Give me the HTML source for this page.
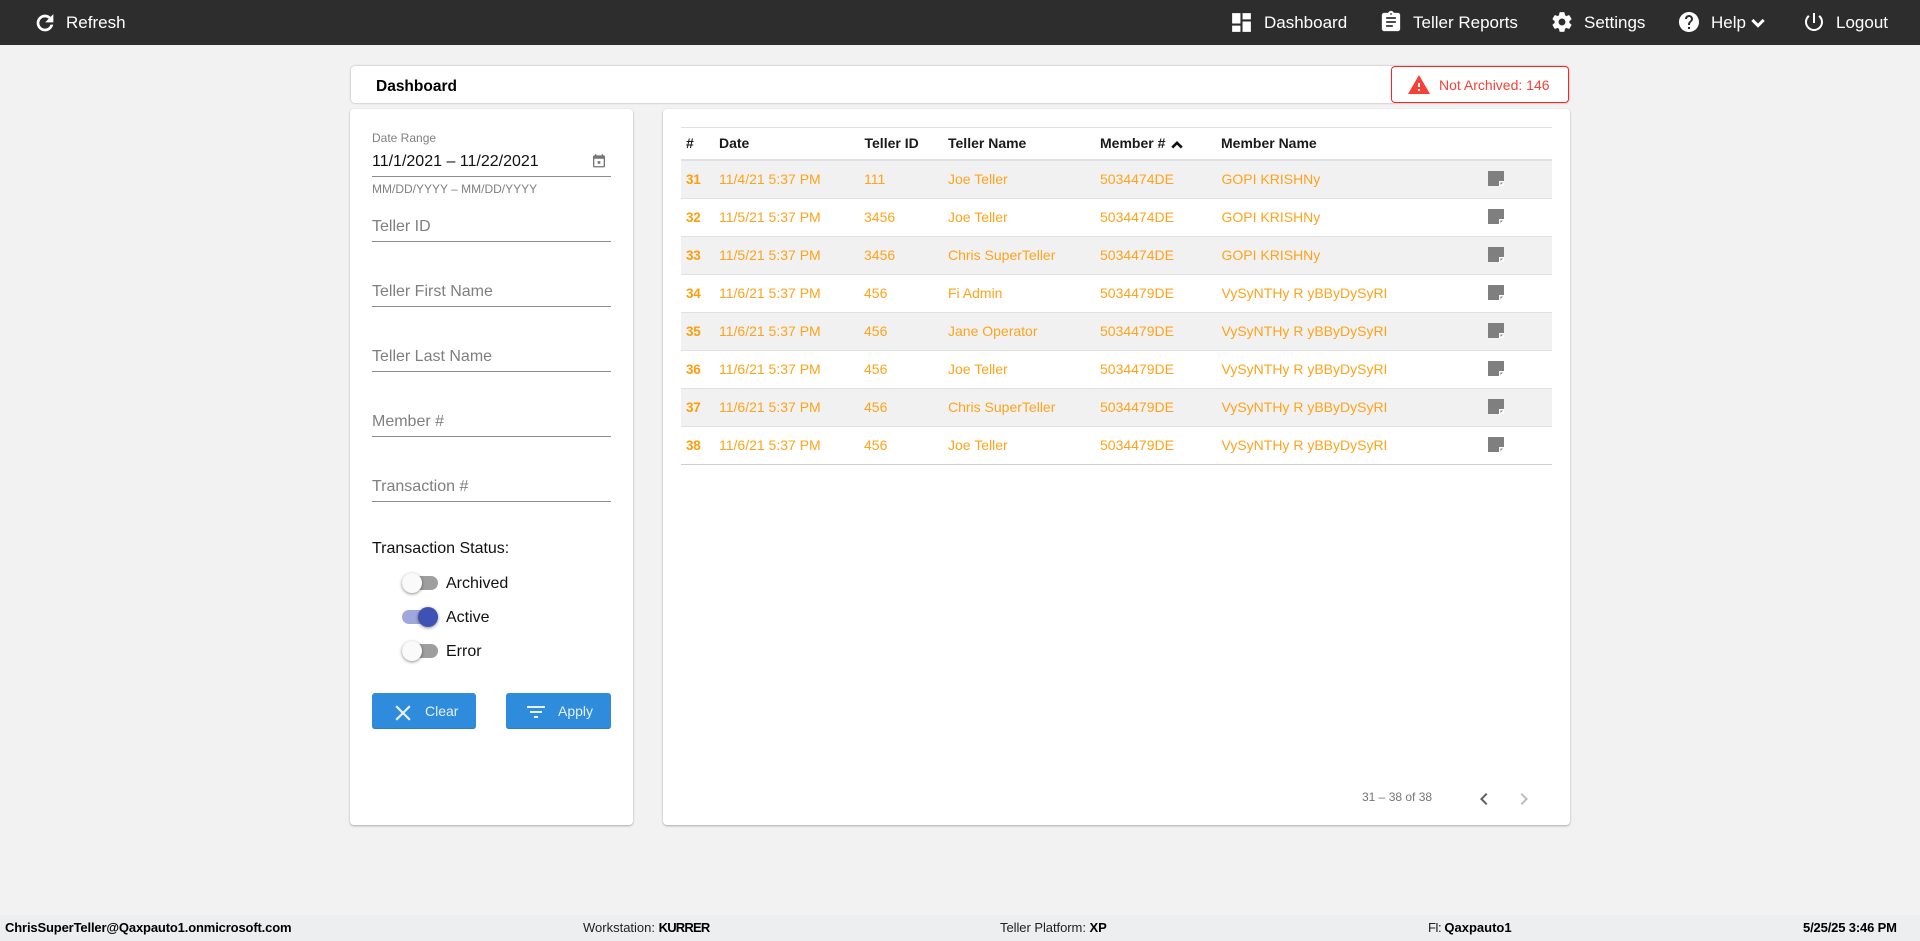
<!DOCTYPE html>
<html><head><meta charset="utf-8"><title>Dashboard</title>
<style>
html,body{margin:0;padding:0;width:1920px;height:941px;overflow:hidden;background:#f2f2f2;font-family:"Liberation Sans",Arial,sans-serif;}
.a{position:absolute;white-space:nowrap;line-height:1;}
svg{position:absolute;display:block;}
#top{position:absolute;left:0;top:0;width:1920px;height:45px;background:#2d2d2d;}
.nav{color:#fff;font-size:17px;top:14px;}
.card{position:absolute;background:#fff;border-radius:4px;box-shadow:0 1px 2px rgba(0,0,0,.3);}
.ph{color:#7f7f7f;font-size:16px;left:372px;}
.ul{position:absolute;left:372px;width:239px;height:1px;background:#8c8c8c;}
.track{position:absolute;left:402px;width:36px;height:14px;border-radius:7px;background:#9e9e9e;}
.thumb{position:absolute;left:402px;width:20px;height:20px;border-radius:50%;background:#fafafa;box-shadow:0 1px 3px rgba(0,0,0,.45);}
.lab{font-size:16px;color:#111;left:446px;}
.btn{position:absolute;top:693px;height:36px;background:#2f8cdc;border-radius:3px;box-shadow:inset 0 -1px 0 #2a7fc8;}
.bt{color:#e6f1fb;font-size:14px;top:704px;}
.row{position:absolute;left:681px;width:871px;height:37px;border-bottom:1px solid #dfe0e5;}
.row.o{background:#f1f1f2;}
.c{position:absolute;top:10px;font-size:14px;line-height:16px;color:#ffa31a;white-space:nowrap;}
.c0{left:5px;top:11px;font-weight:bold;font-size:13.5px;letter-spacing:-.3px;color:#ff9d0a;}.c1{left:38px;}.c2{left:183px;}.c3{left:267px;}.c4{left:419px;}.c5{left:540.5px;}
.n{position:absolute;left:807px;top:10px;width:16px;height:15px;}
.h{position:absolute;top:135px;font-size:14px;font-weight:bold;color:#1a1a1a;line-height:16px;white-space:nowrap;}
.f{font-size:13px;color:#222;top:921px;}
.f b{color:#000;}
</style></head><body>
<div id="top"></div>
<svg style="left:32.500px;top:11px" width="24" height="24" viewBox="0 0 24 24" fill="#fff" stroke="#fff" stroke-width=".7"><path d="M17.65 6.35C16.2 4.9 14.21 4 12 4c-4.42 0-7.99 3.58-7.99 8s3.57 8 7.99 8c3.73 0 6.84-2.55 7.73-6h-2.08c-.82 2.33-3.04 4-5.65 4-3.31 0-6-2.69-6-6s2.69-6 6-6c1.66 0 3.14.69 4.22 1.78L13 11h7V4l-2.35 2.35z"/></svg>
<div class="a nav" style="left:66px">Refresh</div>
<svg style="left:1229px;top:9.500px" width="25" height="25" viewBox="0 0 24 24" fill="#fff"><path d="M3 13h8V3H3v10zm0 8h8v-6H3v6zm10 0h8V11h-8v10zm0-18v6h8V3h-8z"/></svg>
<div class="a nav" style="left:1264px">Dashboard</div>
<svg style="left:1379px;top:10px" width="24" height="24" viewBox="0 0 24 24" fill="#fff" stroke="#fff" stroke-width=".3"><path d="M19 3h-4.18C14.4 1.84 13.3 1 12 1c-1.3 0-2.4.84-2.82 2H5c-1.1 0-2 .9-2 2v14c0 1.1.9 2 2 2h14c1.1 0 2-.9 2-2V5c0-1.1-.9-2-2-2zm-7 0c.55 0 1 .45 1 1s-.45 1-1 1-1-.45-1-1 .45-1 1-1zm2 14H7v-2h7v2zm3-4H7v-2h10v2zm0-4H7V7h10v2z"/></svg>
<div class="a nav" style="left:1413px">Teller Reports</div>
<svg style="left:1550px;top:10px" width="24" height="24" viewBox="0 0 24 24" fill="#fff" stroke="#fff" stroke-width=".4"><path d="M19.14,12.94c0.04-0.3,0.06-0.61,0.06-0.94c0-0.32-0.02-0.64-0.07-0.94l2.03-1.58c0.18-0.14,0.23-0.41,0.12-0.61 l-1.92-3.32c-0.12-0.22-0.37-0.29-0.59-0.22l-2.39,0.96c-0.5-0.38-1.03-0.7-1.62-0.94L14.4,2.81c-0.04-0.24-0.24-0.41-0.48-0.41 h-3.84c-0.24,0-0.43,0.17-0.47,0.41L9.25,5.35C8.66,5.59,8.12,5.92,7.63,6.29L5.24,5.33c-0.22-0.08-0.47,0-0.59,0.22L2.74,8.87 C2.62,9.08,2.66,9.34,2.86,9.48l2.03,1.58C4.84,11.36,4.8,11.69,4.8,12s0.02,0.64,0.07,0.94l-2.03,1.58 c-0.18,0.14-0.23,0.41-0.12,0.61l1.92,3.32c0.12,0.22,0.37,0.29,0.59,0.22l2.39-0.96c0.5,0.38,1.03,0.7,1.62,0.94l0.36,2.54 c0.05,0.24,0.24,0.41,0.48,0.41h3.84c0.24,0,0.44-0.17,0.47-0.41l0.36-2.54c0.59-0.24,1.13-0.56,1.62-0.94l2.39,0.96 c0.22,0.08,0.47,0,0.59-0.22l1.92-3.32c0.12-0.22,0.07-0.47-0.12-0.61L19.14,12.94z M12,15.6c-1.98,0-3.6-1.62-3.6-3.6 s1.62-3.6,3.6-3.6s3.6,1.62,3.6,3.6S13.98,15.6,12,15.6z"/></svg>
<div class="a nav" style="left:1584px">Settings</div>
<svg style="left:1677px;top:10px" width="24" height="24" viewBox="0 0 24 24" fill="#fff"><path d="M12 2C6.48 2 2 6.48 2 12s4.48 10 10 10 10-4.48 10-10S17.52 2 12 2zm1 17h-2v-2h2v2zm2.07-7.750l-.9.92C13.45 12.9 13 13.5 13 15h-2v-.5c0-1.1.45-2.1 1.17-2.83l1.24-1.26c.37-.36.59-.86.59-1.41 0-1.1-.9-2-2-2s-2 .9-2 2H8c0-2.21 1.79-4 4-4s4 1.79 4 4c0 .88-.36 1.68-.93 2.25z"/></svg>
<div class="a nav" style="left:1711px">Help</div>
<svg style="left:1746px;top:10.500px" width="24" height="24" viewBox="0 0 24 24" fill="#fff" stroke="#fff" stroke-width="1"><path d="M16.59 8.59L12 13.17 7.41 8.59 6 10l6 6 6-6z"/></svg>
<svg style="left:1802px;top:10px" width="24" height="24" viewBox="0 0 24 24" fill="#fff"><path d="M13 3h-2v10h2V3zm4.83 2.170l-1.42 1.42C17.99 7.86 19 9.81 19 12c0 3.87-3.13 7-7 7s-7-3.13-7-7c0-2.19 1.01-4.14 2.58-5.42L6.17 5.17C4.23 6.82 3 9.26 3 12c0 4.97 4.03 9 9 9s9-4.03 9-9c0-2.74-1.23-5.18-3.17-6.83z"/></svg>
<div class="a nav" style="left:1836px">Logout</div>

<div class="card" style="left:351px;top:66px;width:1218px;height:37px;box-shadow:0 0 2px rgba(0,0,0,.3)"></div>
<div class="a" style="left:376px;top:78.500px;font-size:15.500px;font-weight:bold;color:#000">Dashboard</div>
<div style="position:absolute;left:1391px;top:66px;width:176px;height:35px;background:#fff;border:1px solid #f22;border-radius:4px"></div>
<svg style="left:1406.500px;top:73px" width="24" height="24" viewBox="0 0 24 24" fill="#f44336"><path d="M1 21h22L12 2 1 21zm12-3h-2v-2h2v2zm0-4h-2v-4h2v4z"/></svg>
<div class="a" style="left:1439px;top:78px;font-size:14px;color:#f44336">Not Archived: 146</div>

<div class="card" style="left:350px;top:109px;width:283px;height:716px"></div>
<div class="a" style="left:372px;top:132px;font-size:12px;color:#808080">Date Range</div>
<div class="a" style="left:372px;top:154px;font-size:16px;color:#111">11/1/2021 – 11/22/2021</div>
<svg style="left:593px;top:154px" width="12" height="13.500" viewBox="3 1 18 20" fill="#757575"><path d="M16 1v2H8V1H6v2H5c-1.100 0-2 .9-2 2v14c0 1.100.9 2 2 2h14c1.100 0 2-.9 2-2V5c0-1.100-.9-2-2-2h-1V1h-2zM5 8h14v11H5V8zm5 3.500h4v4h-4v-4z"/></svg>
<div class="ul" style="top:176px"></div>
<div class="a" style="left:372px;top:183px;font-size:12px;color:#808080">MM/DD/YYYY – MM/DD/YYYY</div>
<div class="a ph" style="top:219px">Teller ID</div><div class="ul" style="top:241px"></div>
<div class="a ph" style="top:284px">Teller First Name</div><div class="ul" style="top:306px"></div>
<div class="a ph" style="top:349px">Teller Last Name</div><div class="ul" style="top:371px"></div>
<div class="a ph" style="top:414px">Member #</div><div class="ul" style="top:436px"></div>
<div class="a ph" style="top:479px">Transaction #</div><div class="ul" style="top:501px"></div>
<div class="a" style="left:372px;top:541px;font-size:16px;color:#111">Transaction Status:</div>
<div class="track" style="top:576px"></div><div class="thumb" style="top:573px"></div>
<div class="a lab" style="top:575.500px">Archived</div>
<div class="track" style="top:610px;background:#9fa8da"></div><div class="thumb" style="top:607px;left:418px;background:#3f51b5"></div>
<div class="a lab" style="top:609.500px">Active</div>
<div class="track" style="top:644px"></div><div class="thumb" style="top:641px"></div>
<div class="a lab" style="top:643.500px">Error</div>
<div class="btn" style="left:372px;width:104px"></div>
<svg style="left:389.600px;top:699.600px" width="26" height="26" viewBox="0 0 24 24" fill="#e6f1fb"><path d="M19 6.410L17.590 5 12 10.590 6.410 5 5 6.410 10.590 12 5 17.590 6.410 19 12 13.410 17.590 19 19 17.590 13.410 12z"/></svg>
<div class="a bt" style="left:425px">Clear</div>
<div class="btn" style="left:506px;width:105px"></div>
<svg style="left:524px;top:700px" width="24" height="24" viewBox="0 0 24 24" fill="#e6f1fb"><path d="M10 18h4v-2h-4v2zM3 6v2h18V6H3zm3 7h12v-2H6v2z"/></svg>
<div class="a bt" style="left:558px">Apply</div>

<div class="card" style="left:662.500px;top:109px;width:907.500px;height:716px"></div>
<div style="position:absolute;left:681px;top:127px;width:871px;height:1px;background:#dfe0e5"></div>
<div class="h" style="left:686px">#</div>
<div class="h" style="left:719px">Date</div>
<div class="h" style="left:864.500px">Teller ID</div>
<div class="h" style="left:948px">Teller Name</div>
<div class="h" style="left:1100px">Member #</div>
<svg style="left:1167px;top:134.500px" width="20" height="20" viewBox="0 0 24 24" fill="#111" stroke="#111" stroke-width="1.200"><path d="M12 8l-6 6 1.410 1.410L12 10.830l4.590 4.580L18 14z"/></svg>
<div class="h" style="left:1221px">Member Name</div>
<div style="position:absolute;left:681px;top:159px;width:871px;height:2px;background:#dfe0e5"></div>

<div class="row o" style="top:161px"><span class="c c0">31</span><span class="c c1">11/4/21 5:37 PM</span><span class="c c2">111</span><span class="c c3">Joe Teller</span><span class="c c4">5034474DE</span><span class="c c5">GOPI KRISHNy</span><svg class="n" viewBox="0 0 16 15"><path fill="#7f7f7f" d="M0 0h16v10l-5 5H0z"/><path fill="#fff" d="M11 15v-5h5v5z"/><path fill="#7f7f7f" d="M12.500 14v-2.500H15z"/></svg></div>
<div class="row" style="top:199px"><span class="c c0">32</span><span class="c c1">11/5/21 5:37 PM</span><span class="c c2">3456</span><span class="c c3">Joe Teller</span><span class="c c4">5034474DE</span><span class="c c5">GOPI KRISHNy</span><svg class="n" viewBox="0 0 16 15"><path fill="#7f7f7f" d="M0 0h16v10l-5 5H0z"/><path fill="#fff" d="M11 15v-5h5v5z"/><path fill="#7f7f7f" d="M12.500 14v-2.500H15z"/></svg></div>
<div class="row o" style="top:237px"><span class="c c0">33</span><span class="c c1">11/5/21 5:37 PM</span><span class="c c2">3456</span><span class="c c3">Chris SuperTeller</span><span class="c c4">5034474DE</span><span class="c c5">GOPI KRISHNy</span><svg class="n" viewBox="0 0 16 15"><path fill="#7f7f7f" d="M0 0h16v10l-5 5H0z"/><path fill="#fff" d="M11 15v-5h5v5z"/><path fill="#7f7f7f" d="M12.500 14v-2.500H15z"/></svg></div>
<div class="row" style="top:275px"><span class="c c0">34</span><span class="c c1">11/6/21 5:37 PM</span><span class="c c2">456</span><span class="c c3">Fi Admin</span><span class="c c4">5034479DE</span><span class="c c5">VySyNTHy R yBByDySyRI</span><svg class="n" viewBox="0 0 16 15"><path fill="#7f7f7f" d="M0 0h16v10l-5 5H0z"/><path fill="#fff" d="M11 15v-5h5v5z"/><path fill="#7f7f7f" d="M12.500 14v-2.500H15z"/></svg></div>
<div class="row o" style="top:313px"><span class="c c0">35</span><span class="c c1">11/6/21 5:37 PM</span><span class="c c2">456</span><span class="c c3">Jane Operator</span><span class="c c4">5034479DE</span><span class="c c5">VySyNTHy R yBByDySyRI</span><svg class="n" viewBox="0 0 16 15"><path fill="#7f7f7f" d="M0 0h16v10l-5 5H0z"/><path fill="#fff" d="M11 15v-5h5v5z"/><path fill="#7f7f7f" d="M12.500 14v-2.500H15z"/></svg></div>
<div class="row" style="top:351px"><span class="c c0">36</span><span class="c c1">11/6/21 5:37 PM</span><span class="c c2">456</span><span class="c c3">Joe Teller</span><span class="c c4">5034479DE</span><span class="c c5">VySyNTHy R yBByDySyRI</span><svg class="n" viewBox="0 0 16 15"><path fill="#7f7f7f" d="M0 0h16v10l-5 5H0z"/><path fill="#fff" d="M11 15v-5h5v5z"/><path fill="#7f7f7f" d="M12.500 14v-2.500H15z"/></svg></div>
<div class="row o" style="top:389px"><span class="c c0">37</span><span class="c c1">11/6/21 5:37 PM</span><span class="c c2">456</span><span class="c c3">Chris SuperTeller</span><span class="c c4">5034479DE</span><span class="c c5">VySyNTHy R yBByDySyRI</span><svg class="n" viewBox="0 0 16 15"><path fill="#7f7f7f" d="M0 0h16v10l-5 5H0z"/><path fill="#fff" d="M11 15v-5h5v5z"/><path fill="#7f7f7f" d="M12.500 14v-2.500H15z"/></svg></div>
<div class="row" style="top:427px;border-bottom-color:#cfcfcf"><span class="c c0">38</span><span class="c c1">11/6/21 5:37 PM</span><span class="c c2">456</span><span class="c c3">Joe Teller</span><span class="c c4">5034479DE</span><span class="c c5">VySyNTHy R yBByDySyRI</span><svg class="n" viewBox="0 0 16 15"><path fill="#7f7f7f" d="M0 0h16v10l-5 5H0z"/><path fill="#fff" d="M11 15v-5h5v5z"/><path fill="#7f7f7f" d="M12.500 14v-2.500H15z"/></svg></div>

<div class="a" style="left:1362px;top:791px;font-size:12px;color:#757575">31 – 38 of 38</div>
<svg style="left:1472px;top:787px" width="24" height="24" viewBox="0 0 24 24" fill="#616161"><path d="M15.410 7.410L14 6l-6 6 6 6 1.410-1.410L10.830 12z"/></svg>
<svg style="left:1512px;top:787px" width="24" height="24" viewBox="0 0 24 24" fill="#bdbdbd"><path d="M8.590 16.590L10 18l6-6-6-6-1.410 1.410L13.170 12z"/></svg>

<div style="position:absolute;left:0;top:915px;width:1920px;height:26px;background:#edeef0"></div>
<div class="a f" style="left:5px;letter-spacing:-.15px"><b>ChrisSuperTeller@Qaxpauto1.onmicrosoft.com</b></div>
<div class="a f" style="left:583px">Workstation: <b style="letter-spacing:-.8px">KURRER</b></div>
<div class="a f" style="left:1000px;letter-spacing:-.05px">Teller Platform: <b>XP</b></div>
<div class="a f" style="left:1428px"><span style="letter-spacing:-.8px">FI:</span> <b>Qaxpauto1</b></div>
<div class="a f" style="left:1803px;letter-spacing:-.15px"><b>5/25/25 3:46 PM</b></div>
</body></html>
